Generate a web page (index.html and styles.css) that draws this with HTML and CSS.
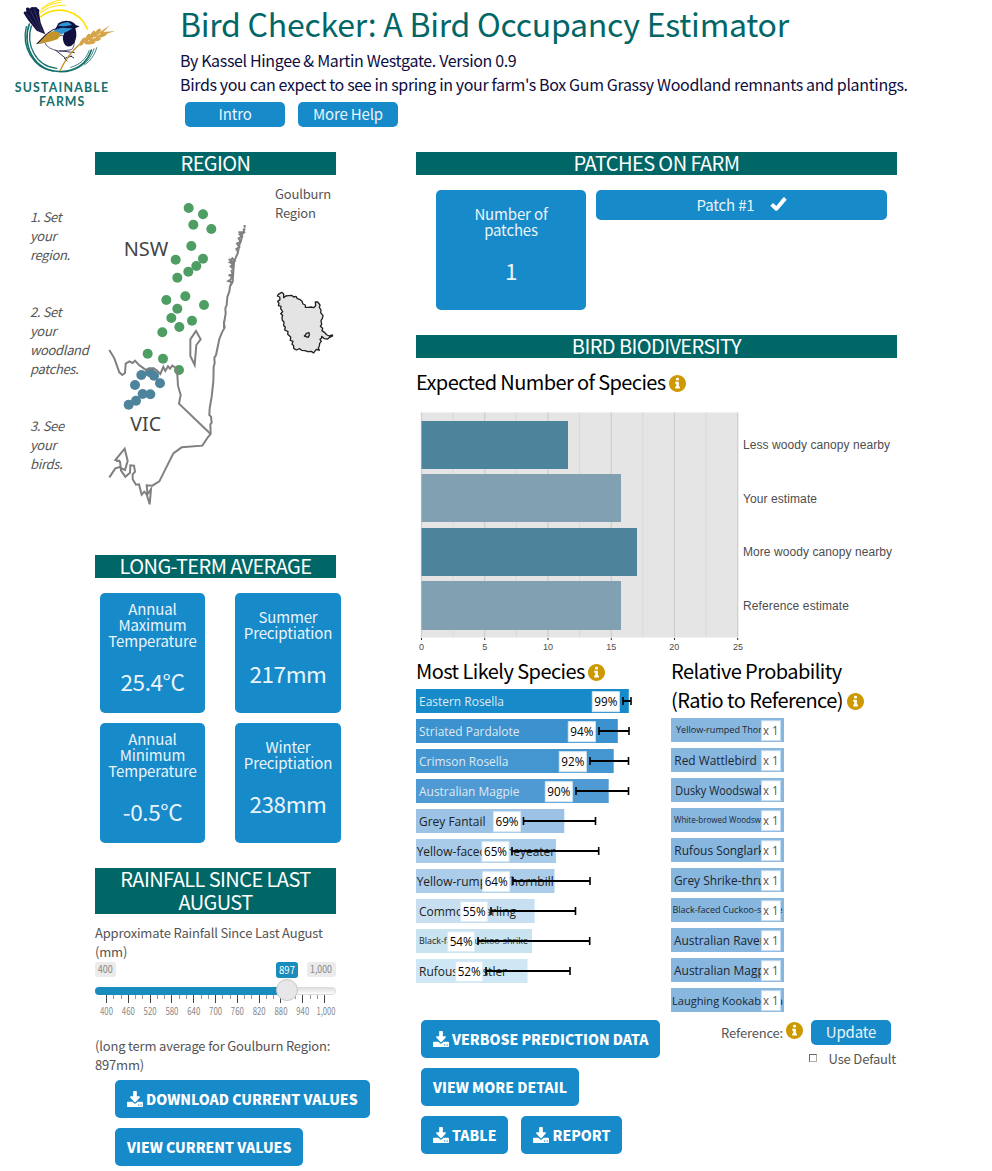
FILE: index.html
```html
<!DOCTYPE html>
<html lang="en">
<head>
<meta charset="utf-8">
<title>Bird Checker</title>
<link rel="stylesheet" href="styles.css">
</head>
<body>
<svg class="defs" width="0" height="0">
  <symbol id="info" viewBox="8 8 496 496"><path d="M256 8C119.043 8 8 119.083 8 256c0 136.997 111.043 248 248 248s248-111.003 248-248C504 119.083 392.957 8 256 8zm0 80c26 0 46 18 46 42s-20 42-46 42-46-18-46-42 20-42 46-42zm72 302c0 7-5 12-12 12H200c-7 0-12-5-12-12v-32c0-7 5-12 12-12h20v-82h-20c-7 0-12-5-12-12v-32c0-7 5-12 12-12h84c7 0 12 5 12 12v126h20c7 0 12 5 12 12z"/></symbol>
  <symbol id="download" viewBox="0 0 1664 1536" preserveAspectRatio="none"><path d="M1280 1344q0-26-19-45t-45-19-45 19-19 45 19 45 45 19 45-19 19-45zm256 0q0-26-19-45t-45-19-45 19-19 45 19 45 45 19 45-19 19-45zm128-224v320q0 40-28 68t-68 28h-1472q-40 0-68-28t-28-68v-320q0-40 28-68t68-28h465l135 136q58 56 136 56t136-56l136-136h464q40 0 68 28t28 68zm-325-569q17 41-14 70l-448 448q-18 19-45 19t-45-19l-448-448q-31-29-14-70 17-39 59-39h256v-448q0-26 19-45t45-19h256q26 0 45 19t19 45v448h256q42 0 59 39z"/></symbol>
</svg>

<header class="top">
  <svg class="logo" width="130" height="115" viewBox="0 0 390 345">
    <g fill="none" stroke="#14706c" stroke-linecap="round">
      <path stroke-width="5" d="M88 72C66 130 96 214 183 215C228 214 262 190 274 150"/>
      <path stroke-width="4" d="M94 78C76 134 108 200 170 205M79 80C64 140 100 206 160 213"/>
      <path stroke-width="2.5" d="M282 146C274 176 250 200 222 208M290 143C284 166 270 184 254 194M212 202C240 194 260 176 267 152"/>
    </g>
    <g fill="none" stroke="#ffe100" stroke-linecap="round">
      <path stroke-width="5" d="M122 50C170 14 240 30 262 87"/>
      <path stroke-width="3" d="M118 42C140 22 166 14 196 16M118 36C138 16 160 8 182 8M124 26C144 10 164 2 184 0"/>
    </g>
    <path fill="#11103f" d="M71 40Q70 32 79 35L78 25Q84 20 90 26Q93 18 101 22Q110 18 114 27Q120 26 117 38L122 68L136 103L110 92L84 60Z"/>
    <path d="M90 30L124 95M102 26L128 98M79 40L118 94" stroke="#777799" stroke-width="1"/>
    <path fill="#fff" stroke="#11103f" stroke-width="2" d="M138 103L110 131L134 127Q142 148 180 154L214 149Q226 140 222 110Z"/>
    <path fill="#c4942b" d="M112 131L140 103Q160 90 178 92Q188 104 172 118Q146 128 112 131Z"/>
    <path fill="none" stroke="#11103f" stroke-width="3" d="M112 131L142 100Q160 86 176 84"/>
    <path fill="#11103f" d="M164 92Q170 80 175 70Q190 58 212 64Q224 68 228 76L239 79L226 85Q234 108 222 130Q210 146 196 136Q184 120 192 100L180 92Z"/>
    <path fill="#2f96d5" d="M174 78Q184 66 206 67L216 75L196 79ZM158 94Q176 81 194 84L218 85L206 92Q192 98 184 104Q176 94 158 94Z"/>
    <path fill="none" stroke="#11103f" stroke-width="2.5" d="M166 150L196 174L216 168M178 152L224 158M192 174L202 184M212 168L222 174"/>
    <path fill="none" stroke="#c4942b" stroke-width="4" d="M180 212Q202 164 244 128"/>
    <g fill="#d6a44a">
      <ellipse cx="248" cy="125" rx="14" ry="6" transform="rotate(-55 248 125)"/>
      <ellipse cx="262" cy="116" rx="16" ry="6" transform="rotate(-65 262 116)"/>
      <ellipse cx="276" cy="107" rx="17" ry="6" transform="rotate(-62 276 107)"/>
      <ellipse cx="291" cy="99" rx="16" ry="6" transform="rotate(-50 291 99)"/>
      <ellipse cx="270" cy="128" rx="16" ry="5" transform="rotate(-8 270 128)"/>
      <ellipse cx="286" cy="119" rx="17" ry="5" transform="rotate(-10 286 119)"/>
      <ellipse cx="304" cy="107" rx="18" ry="5" transform="rotate(-18 304 107)"/>
      <path d="M296 98L330 76L310 96L345 93L308 106Z"/>
    </g>
    <text class="logo-text" x="44" y="275" textLength="280">SUSTAINABLE</text>
    <text class="logo-text" x="117" y="318" textLength="136">FARMS</text>
  </svg>
  <div class="intro">
    <h1>Bird Checker: A Bird Occupancy Estimator</h1>
    <p class="byline">By Kassel Hingee &amp; Martin Westgate. Version 0.9</p>
    <p class="tagline">Birds you can expect to see in spring in your farm's Box Gum Grassy Woodland remnants and plantings.</p>
    <div class="top-buttons"><button class="small-btn w100">Intro</button><button class="small-btn w100">More Help</button></div>
  </div>
</header>

<main class="main">
  <aside class="steps">
    <p>1. Set your region.</p><p>2. Set your woodland patches.</p><p>3. See your birds.</p>
  </aside>

  <section class="left">
    <h2>REGION</h2>
    <div class="region">
      <svg class="map" width="160" height="320" viewBox="300 150 480 960">
        <g fill="#4e9d63">
          <circle cx="566" cy="189" r="15"/><circle cx="609" cy="208" r="15"/><circle cx="580" cy="239" r="15"/><circle cx="634" cy="252" r="15"/><circle cx="574" cy="303" r="15"/><circle cx="527" cy="344" r="15"/><circle cx="609" cy="341" r="15"/><circle cx="589" cy="363" r="15"/><circle cx="565" cy="380" r="15"/><circle cx="532" cy="398" r="15"/><circle cx="556" cy="454" r="15"/><circle cx="499" cy="465" r="15"/><circle cx="612" cy="480" r="15"/><circle cx="532" cy="491" r="15"/><circle cx="514" cy="519" r="15"/><circle cx="576" cy="527" r="15"/><circle cx="538" cy="546" r="15"/><circle cx="487" cy="562" r="15"/><circle cx="443" cy="626" r="15"/><circle cx="489" cy="641" r="15"/><circle cx="537" cy="675" r="15"/>
        </g>
        <g fill="#4d849c">
          <circle cx="424" cy="690" r="15"/><circle cx="450" cy="682" r="15"/><circle cx="462" cy="692" r="15"/><circle cx="480" cy="715" r="15"/><circle cx="405" cy="720" r="15"/><circle cx="428" cy="747" r="15"/><circle cx="451" cy="748" r="15"/><circle cx="408" cy="767" r="15"/><circle cx="386" cy="779" r="15"/>
        </g>
        <g fill="none" stroke="#808080" stroke-width="6">
          <path d="M328 615L343 640L358 682L367 690L375 684L377 656L388 649L398 654L405 647L417 660L424 665L436 674L448 673L460 669L470 676L481 687L490 666L496 678L504 664L510 671L517 662L528 669L532 690L534 722L542 750L537 776L632 867"/>
          <path d="M734 240V248M736 252L731 254L733 262L727 266L725 280L718 300L713 325L702 350L700 380L698 410L690 424L688 440L682 456L680 480L676 490L677 505L672 535L674 548L666 562L658 582L648 630L643 638L644 655L641 665L640 710L635 755L629 790L628 810L633 815L635 833L631 838L632 867L624 876L607 902L545 907L520 925L478 1009L457 1022L440 1021L442 1043L439 1047L433 1040L425 1049L417 1018L408 1019L398 1003L398 988L405 980L402 962L391 961L390 983L376 995L363 977L360 950L346 945L374 911L383 948L375 975L365 970L360 965"/>
          <path d="M672 528V550M328 997L346 970L360 966M360 947L348 947M439 1045L449 1078L453 1033L442 1048M588 558L602 583L589 600L584 660L571 633L571 583Z"/>
          <path d="M715 262H730L719 268L726 274L716 280L722 290L711 296L718 306L709 312L715 322M686 342L692 346L697 340L704 348L690 352L700 358L692 364L698 370L702 352M694 374L698 390L686 390L696 394L692 404L685 408L696 412L691 422"/>
        </g>
        <text class="map-text" x="371" y="332" textLength="134" lengthAdjust="spacingAndGlyphs">NSW</text>
        <text class="map-text" x="391" y="857" textLength="92" lengthAdjust="spacingAndGlyphs">VIC</text>
      </svg>
      <div class="region-detail">
        <p>Goulburn<br>Region</p>
        <svg width="80" height="85" viewBox="0 0 240 255">
          <path fill="#e4e4e4" stroke="#222" stroke-width="4" stroke-linejoin="round" d="M40 43L50 37L56 42L56 53L62 48L70 47L80 46L86 51L93 49L97 56L104 58L111 64L114 72L121 75L121 82L130 82L138 81L146 83L152 77L151 66L158 66L165 75L163 82L168 90L167 98L174 107L172 116L168 121L170 133L166 139L173 145L171 152L178 157L186 165L193 168L202 165L203 168L194 172L188 177L178 176L170 169L170 174L165 178L169 184L164 190L163 198L160 204L163 211L155 208L150 213L146 219L139 214L128 215L120 212L110 211L104 206L94 210L86 205L86 197L81 193L84 184L76 181L77 171L68 163L69 155L59 150L61 141L56 137L57 126L52 121L51 112L53 106L47 101L53 95L47 86L48 79L40 77L42 70L38 64L45 59L44 51L37 48Z"/>
          <path fill="#e4e4e4" stroke="#222" stroke-width="4" stroke-linejoin="round" d="M118 168L122 164L124 160L132 158L133 165L130 172Z"/>
        </svg>
      </div>
    </div>

    <h2>LONG-TERM AVERAGE</h2>
    <div class="cards">
      <div class="card"><span>Annual Maximum Temperature</span><b>25.4°C</b></div>
      <div class="card"><span>Summer Preciptiation</span><b>217mm</b></div>
      <div class="card"><span>Annual Minimum Temperature</span><b>-0.5°C</b></div>
      <div class="card"><span>Winter Preciptiation</span><b>238mm</b></div>
    </div>

    <h2>RAINFALL SINCE LAST AUGUST</h2>
    <p class="rain">Approximate Rainfall Since Last August (mm)</p>
    <svg id="slider" class="slider" width="242" height="60" viewBox="95 962 242 60">
      <defs><linearGradient id="track" x2="0" y2="1"><stop stop-color="#ddd"/><stop offset="1" stop-color="#fff"/></linearGradient></defs>
      <rect x="95" y="962" width="21" height="15" rx="3" fill="#ebebeb"/><text x="105.3" y="973" fill="#888" textLength="15" lengthAdjust="spacingAndGlyphs">400</text>
      <rect x="307" y="962" width="29" height="15" rx="3" fill="#ebebeb"/><text x="321" y="973" fill="#888" textLength="22" lengthAdjust="spacingAndGlyphs">1,000</text>
      <rect x="276" y="962" width="22" height="16" rx="3" fill="#178cbd"/><text x="287" y="974" fill="#fff" textLength="16" lengthAdjust="spacingAndGlyphs">897</text>
      <rect x="95.5" y="987.5" width="240" height="7" rx="3.5" fill="url(#track)" stroke="#dcdcdc"/>
      <path d="M99 987H287V995H99A4 4 0 0 1 99 987Z" fill="#178cbd"/>
      <g id="ticks"></g>
      <circle cx="287" cy="990" r="10.5" fill="#e7e7e9" stroke="#c8c8c8"/>
    </svg>
    <p class="average">(long term average for Goulburn Region: 897mm)</p>
    <div class="actions left-actions">
      <button class="btn"><svg class="dl"><use href="#download"/></svg>DOWNLOAD CURRENT VALUES</button>
      <button class="btn">VIEW CURRENT VALUES</button>
    </div>
  </section>

  <section class="right">
    <h2>PATCHES ON FARM</h2>
    <div class="patches">
      <div class="card"><span>Number of patches</span><b>1</b></div>
      <button class="patch">Patch #1<svg width="17" height="14" viewBox="1078 155 51 42"><path fill="#fff" d="M1079 181L1087 173L1097 182L1117 157L1121 156L1128 163L1101 195Q1097 198 1093 195Z"/></svg></button>
    </div>

    <h2>BIRD BIODIVERSITY</h2>
    <h3 class="expected">Expected Number of Species<svg class="info"><use href="#info"/></svg></h3>
    <svg class="chart" width="490" height="250" viewBox="416 405 490 250">
      <rect x="421" y="412.5" width="317" height="225" fill="#e5e5e5"/>
      <path stroke="#d9d9d9" d="M453 412.5V637.5M516.3 412.5V637.5M579.5 412.5V637.5M642.8 412.5V637.5M706 412.5V637.5"/>
      <path stroke="#cfcfcf" stroke-width="1.3" d="M421.5 412.5V637.5M484.7 412.5V637.5M548 412.5V637.5M611.3 412.5V637.5M674.5 412.5V637.5M737.7 412.5V637.5"/>
      <path stroke="#333" d="M421.5 638V640M484.7 638V640M548 638V640M611.3 638V640M674.5 638V640M737.7 638V640"/>
      <rect x="421.5" y="421" width="146.5" height="48" fill="#4d849c"/>
      <rect x="421.5" y="474" width="199.5" height="48" fill="#81a1b3"/>
      <rect x="421.5" y="528" width="215.5" height="48" fill="#4d849c"/>
      <rect x="421.5" y="581" width="199.5" height="49" fill="#81a1b3"/>
      <g class="chart-label"><text x="743" y="449" textLength="147">Less woody canopy nearby</text><text x="743" y="503" textLength="74">Your estimate</text><text x="743" y="556" textLength="149">More woody canopy nearby</text><text x="743" y="610" textLength="106">Reference estimate</text></g>
      <g class="axis-label"><text x="421.5" y="650">0</text><text x="484.7" y="650">5</text><text x="548" y="650">10</text><text x="611.3" y="650">15</text><text x="674.2" y="650">20</text><text x="738" y="650">25</text></g>
    </svg>

    <div class="lists">
      <div class="likely">
        <h3>Most Likely Species<svg class="info"><use href="#info"/></svg></h3>
        <svg id="likely" width="220" height="296" viewBox="416 689 220 296"></svg>
        <div class="actions">
          <button class="btn"><svg class="dl"><use href="#download"/></svg>VERBOSE PREDICTION DATA</button>
          <button class="btn">VIEW MORE DETAIL</button>
          <div class="pair"><button class="btn"><svg class="dl"><use href="#download"/></svg>TABLE</button><button class="btn"><svg class="dl"><use href="#download"/></svg>REPORT</button></div>
        </div>
      </div>
      <div class="ratio">
        <h3>Relative Probability<br>(Ratio to Reference)<svg class="info"><use href="#info"/></svg></h3>
        <svg id="ratio" width="113" height="294" viewBox="671 718 113 294"></svg>
        <div class="reference"><span>Reference:</span><svg class="info"><use href="#info"/></svg><button class="small-btn">Update</button></div>
        <label class="default"><i class="box"></i>Use Default</label>
      </div>
    </div>
  </section>
</main>
<script src="charts.js"></script>
</body>
</html>
```
FILE: styles.css
```css
* { box-sizing: border-box; }
body { margin: 0; width: 992px; height: 1171px; overflow: hidden; background: #fff; color: #555; font: 13px/19px "Noto Sans CJK SC", sans-serif; letter-spacing: -.18px; }
svg { letter-spacing: 0; }
p, h1, h2, h3 { margin: 0; font-weight: 400; }
button { border: 0; padding: 0; font: inherit; color: #fff; background: #178aca; white-space: nowrap; }
.defs { display: block; }

.top { display: flex; height: 152px; }
.logo { flex: none; margin-right: 50px; }
.logo-text { font: 700 37px Lato, sans-serif; fill: #14706c; }
.intro { white-space: nowrap; color: #0d0d3f; font-size: 16px; line-height: 24px; margin-top: -1px; letter-spacing: -.355px; }
.intro h1 { color: #006666; font-size: 32px; line-height: 49px; letter-spacing: -.26px; }
.top-buttons { display: flex; gap: 13px; margin: 6px 0 0 5px; }
.small-btn { width: 80px; height: 25px; border-radius: 5px; font-size: 15px; line-height: 23px; padding-bottom: 2px; color: #eaf4fa; letter-spacing: -.15px; }
.w100 { width: 100px; }

.main { display: flex; }
.steps { width: 59px; margin: 55px 6px 0 30px; display: flex; flex-direction: column; gap: 38px; font-style: italic; letter-spacing: -.35px; }
.left { width: 241px; margin-right: 80px; }
.right { width: 481px; }
h2 { margin-top: -1px; padding-bottom: 1px; background: linear-gradient(#006666, #006666) 0 1px no-repeat; color: #fff; text-align: center; font-size: 20px; line-height: 23px; letter-spacing: -.58px; }

.region { display: flex; height: 380px; padding-left: 5px; }
.map { flex: none; margin-top: 20px; }
.map-text { font: 60px "Noto Sans", sans-serif; fill: #444; }
.region-detail { margin: 9px 0 0 5px; }
.region-detail p { padding-left: 10px; }
.region-detail svg { display: block; margin-top: 58px; }

.cards { display: grid; grid-template-columns: 105px 106px; gap: 10px 30px; margin: 15px 0 25px 5px; }
.card { height: 120px; border-radius: 5px; background: #178aca; color: #eaf4fa; display: flex; flex-direction: column; justify-content: center; gap: 8px; padding-bottom: 1px; text-align: center; font-size: 15px; line-height: 16px; letter-spacing: -.15px; }
.card b { font-weight: 400; font-size: 22.5px; line-height: 48px; letter-spacing: -.4px; }

.rain { margin-top: 9px; }
.slider { display: block; margin-top: 1px; }
.slider text { font-size: 10px; text-anchor: middle; }
.average { margin-top: 14px; }
.actions { display: flex; flex-direction: column; align-items: flex-start; gap: 10px; }
.left-actions { margin: 6px 0 0 20px; }
.btn { height: 38px; padding: 0 12px; border-radius: 5px; font-size: 14px; font-weight: 900; letter-spacing: 0; display: flex; align-items: center; }
.dl { width: 16px; height: 16px; margin-right: 3px; fill: #fff; }

.patches { display: flex; gap: 10px; height: 160px; padding: 15px 10px 0 20px; }
.patches .card { width: 150px; padding: 0 30px 1px; }
.patch { width: 291px; height: 30px; padding-bottom: 2px; border-radius: 5px; font-size: 15px; letter-spacing: -.15px; color: #eaf4fa; display: flex; justify-content: center; align-items: center; gap: 15px; }
h3 { color: #000; font-size: 20px; line-height: 29px; white-space: nowrap; letter-spacing: -.56px; }
.info { width: 17px; height: 17px; margin-left: 4px; fill: #cc9900; vertical-align: -2px; }
.expected { padding-top: 9px; height: 47px; letter-spacing: -.6px; }
.lists .likely h3 .info, .expected .info { margin-left: 3px; }
.chart { display: block; }
.chart-label { font: 12px "Liberation Sans", sans-serif; fill: #4d4d4d; }
.axis-label { font: 9px "Liberation Sans", sans-serif; fill: #4d4d4d; text-anchor: middle; }

.lists { display: flex; margin-top: 1px; }
.likely { width: 255px; }
.likely > svg, .ratio > svg { display: block; margin-top: 4px; }
.likely .actions { margin: 35px 0 0 5px; }
.pair { display: flex; gap: 13px; }
.bar-text { font-family: "Open Sans", sans-serif; }
.ratio { width: 226px; }
.reference { display: flex; margin: 8px 6px 0 0; justify-content: flex-end; height: 25px; }
.reference span { line-height: 25px; }
.reference .info { margin: 2px 8px 0 3px; }
.default { display: flex; justify-content: flex-end; align-items: center; gap: 12px; margin: 4px 1px 0 0; }
.box { width: 8px; height: 8px; margin-bottom: 2px; border: 1px solid #aaa; border-top-color: #666; border-left-color: #666; }
```
FILE: charts.js
```js
const label = (x, y, size, fill, text, width, anchor) =>
  `<text class="bar-text" x="${x}" y="${y}" font-size="${size}" fill="${fill}"${width ? ` textLength="${width}" lengthAdjust="spacingAndGlyphs"` : ''}${anchor ? ` text-anchor="${anchor}"` : ''}>${text}</text>`;

// name, percent, bar end, colour, text start, text width, tag x, interval start, interval end
const likely = [
  ['Eastern Rosella', 99, 628.8, '#178aca', 419, 85, 592.3, 623, 631],
  ['Striated Pardalote', 94, 617.8, '#3b92cf', 419, 100.5, 568.3, 599, 629],
  ['Crimson Rosella', 92, 613.7, '#4496d0', 419, 89.5, 559.3, 590, 628.5],
  ['Australian Magpie', 90, 608.7, '#4f9ad3', 419, 100.5, 545.3, 576, 628.5],
  ['Grey Fantail', 69, 564.3, '#9cc3e5', 419, 66.5, 493.5, 523.5, 595.5],
  ['Yellow-faced Honeyeater', 65, 556, '#a8cbe9', 416.7, 138.5, 482, 512, 598.7],
  ['Yellow-rumped Thornbill', 64, 554.5, '#abcde9', 416.7, 137, 482.7, 513, 590],
  ['Common Starling', 55, 534.6, '#c7dff1', 419, 97, 460.7, 491, 575.5],
  ['Black-faced Cuckoo-shrike', 54, 532, '#c9e3f1', 419, 109, 447.7, 478, 589.7],
  ['Rufous Whistler', 52, 527.5, '#cfe7f4', 419, 88, 455.7, 486, 570]
];
document.getElementById('likely').innerHTML = likely.map(([name, pct, end, color, tx, tw, bx, a, b], i) => {
  const y = 689 + i * 30, small = i === 8;
  return `<rect x="416" y="${y}" width="${end - 416}" height="24" fill="${color}"/>` +
    label(tx, y + (small ? 15 : 17), small ? 9 : 12, i < 4 ? '#dfeaf3' : '#222', name, tw) +
    `<rect x="${bx}" y="${y + 2.7}" width="27" height="20" fill="#fff" stroke="#d8e9f5"/>` +
    label(bx + 13.5, y + 17, 12, '#000', pct + '%', 23, 'middle') +
    `<path stroke="#000" stroke-width="2" d="M${a} ${y + 12}H${b}"/><path stroke="#000" stroke-width="1.6" d="M${a} ${y + 8}V${y + 16}M${b} ${y + 8}V${y + 16}"/>`;
}).join('');

const ratio = [
  ['Yellow-rumped Thornbill', 676, 9.2, 104],
  ['Red Wattlebird', 674.3, 12, 82.5],
  ['Dusky Woodswallow', 675.3, 12, 104],
  ['White-browed Woodswallow', 674, 8.3, 106.5],
  ['Rufous Songlark', 674.3, 12, 90],
  ['Grey Shrike-thrush', 674, 12, 104],
  ['Black-faced Cuckoo-shrike', 672.5, 9.2, 110],
  ['Australian Raven', 674, 12, 93],
  ['Australian Magpie', 674, 12, 100.5],
  ['Laughing Kookaburra', 672, 11.5, 111]
];
document.getElementById('ratio').innerHTML = ratio.map(([name, x, size, w], i) => {
  const y = 718 + i * 30;
  return `<rect x="671" y="${y}" width="113" height="24" fill="#87b6df"/>` +
    label(x, y + (size < 10 ? 15 : 17), size, '#1c2733', name, w) +
    `<rect x="761.5" y="${y + 2.7}" width="19" height="20" fill="#fff" stroke="#c3daef"/>` +
    label(763, y + 17, 12, '#555', 'x 1', 15.5);
}).join('');

let ticks = '';
for (let i = 0; i <= 30; i++) {
  const x = 106.5 + i * 7.27, major = i % 3 === 0;
  ticks += `<path stroke="${major ? '#444' : '#999'}" d="M${Math.floor(x) + .5} 995V${major ? 1003 : 999}"/>`;
  if (major) {
    const v = 400 + i * 20;
    ticks += `<text x="${i === 30 ? 326 : x}" y="1015" fill="#888" textLength="${i === 30 ? 19 : 13}" lengthAdjust="spacingAndGlyphs">${v === 1000 ? '1,000' : v}</text>`;
  }
}
document.getElementById('ticks').innerHTML = ticks;
```
